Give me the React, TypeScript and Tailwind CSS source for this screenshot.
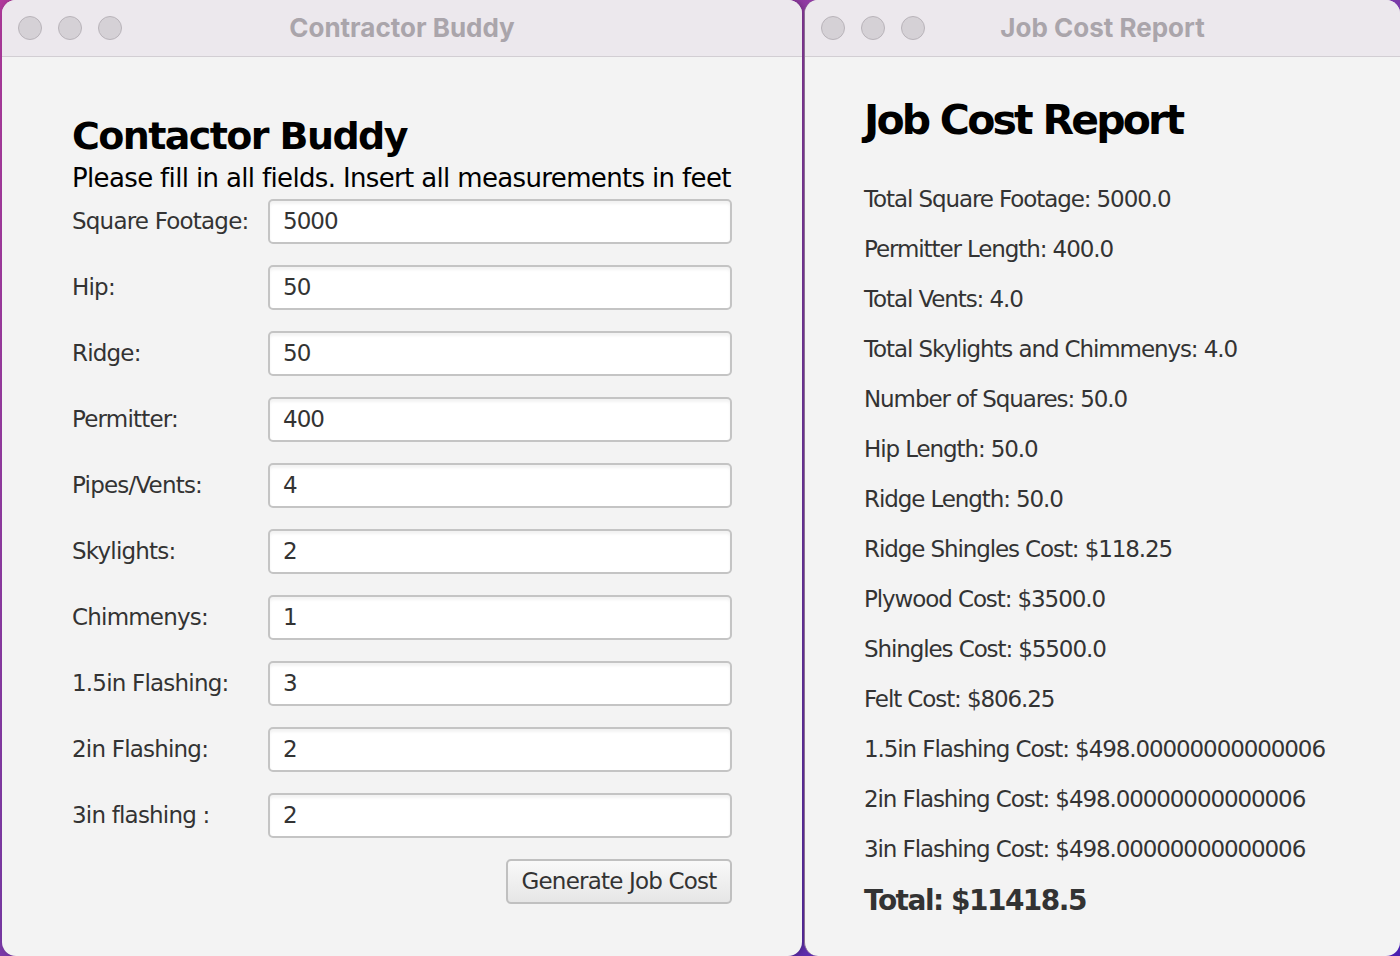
import React from "react";

const fields = [
  { label: "Square Footage:", value: "5000" },
  { label: "Hip:", value: "50" },
  { label: "Ridge:", value: "50" },
  { label: "Permitter:", value: "400" },
  { label: "Pipes/Vents:", value: "4" },
  { label: "Skylights:", value: "2" },
  { label: "Chimmenys:", value: "1" },
  { label: "1.5in Flashing:", value: "3" },
  { label: "2in Flashing:", value: "2" },
  { label: "3in flashing :", value: "2" },
];

const report = [
  "Total Square Footage: 5000.0",
  "Permitter Length: 400.0",
  "Total Vents: 4.0",
  "Total Skylights and Chimmenys: 4.0",
  "Number of Squares: 50.0",
  "Hip Length: 50.0",
  "Ridge Length: 50.0",
  "Ridge Shingles Cost: $118.25",
  "Plywood Cost: $3500.0",
  "Shingles Cost: $5500.0",
  "Felt Cost: $806.25",
  "1.5in Flashing Cost: $498.00000000000006",
  "2in Flashing Cost: $498.00000000000006",
  "3in Flashing Cost: $498.00000000000006",
];

const body = { fontFamily: "'DejaVu Sans', Verdana, sans-serif" };

function TitleBar({ title }: { title: string }) {
  return (
    <div className="relative h-[57px] shrink-0 bg-[#ece8ed] border-b border-[#d2ced3] flex items-center">
      <div className="flex gap-4 pl-[16px]">
        {[0, 1, 2].map((i) => (
          <div key={i} className="w-6 h-6 rounded-full bg-[#d5d1d6] border border-[#b9b4ba]" />
        ))}
      </div>
      <div
        className="absolute inset-0 flex items-center justify-center text-[26px] font-bold text-[#aaa5ab] pb-[2px]"
        style={{ fontFamily: "Inter, Roboto, sans-serif" }}
      >
        {title}
      </div>
    </div>
  );
}

export default function App() {
  return (
    <div className="w-[1400px] h-[956px] overflow-hidden flex bg-gradient-to-br from-[#b03a9c] via-[#7a3aa8] to-[#4a1fb0]">
      {/* Left window */}
      <div className="ml-[2px] w-[800px] h-[956px] rounded-[14px] bg-[#f3f3f3] flex flex-col overflow-hidden shadow-[2px_0_6px_rgba(0,0,0,0.25)]">
        <TitleBar title="Contractor Buddy" />
        <div className="flex-1 pl-[70px] pr-[70px] pt-[55px]" style={body}>
          <h1 className="text-[38px] font-bold text-black leading-[48px] tracking-[-1.6px]">Contactor Buddy</h1>
          <p className="mt-[3px] text-[26px] text-black leading-[30px] tracking-[-0.65px]">
            Please fill in all fields. Insert all measurements in feet
          </p>
          <div className="flex flex-col gap-[21px] mt-[6px]">
            {fields.map((f) => (
              <div key={f.label} className="flex items-center">
                <div className="w-[196px] text-[23px] text-[#333] tracking-[-0.8px]">{f.label}</div>
                <div className="w-[464px] h-[45px] rounded-[5px] border-2 border-[#c4c4c4] bg-white shadow-[inset_0_3px_3px_rgba(0,0,0,0.05)] flex items-center px-[13px] text-[23px] text-[#333] tracking-[-1px]">
                  {f.value}
                </div>
              </div>
            ))}
          </div>
          <div className="flex justify-end mt-[21px] w-[660px]">
            <div className="w-[226px] h-[45px] rounded-[5px] border-2 border-[#c0c0c0] bg-gradient-to-b from-[#f9f9f9] to-[#e6e6e6] flex items-center justify-center text-[23px] text-[#333] tracking-[-0.8px]">
              Generate Job Cost
            </div>
          </div>
        </div>
      </div>
      {/* Right window */}
      <div className="ml-[2px] flex-1 h-[956px] rounded-[14px] bg-[#f3f3f3] flex flex-col overflow-hidden border-l border-[#8a6f92]">
        <TitleBar title="Job Cost Report" />
        <div className="flex-1 pl-[59px] pt-[38px]" style={body}>
          <h2 className="text-[41px] font-bold text-black leading-[50px] tracking-[-2.8px]">Job Cost Report</h2>
          <div className="flex flex-col mt-[29px]">
            {report.map((r) => (
              <div key={r} className="h-[50px] flex items-center text-[23px] text-[#333] tracking-[-1.1px]">
                {r}
              </div>
            ))}
            <div className="h-[54px] flex items-center text-[28px] font-bold text-[#333] tracking-[-1.5px]">
              Total: $11418.5
            </div>
          </div>
        </div>
      </div>
    </div>
  );
}
